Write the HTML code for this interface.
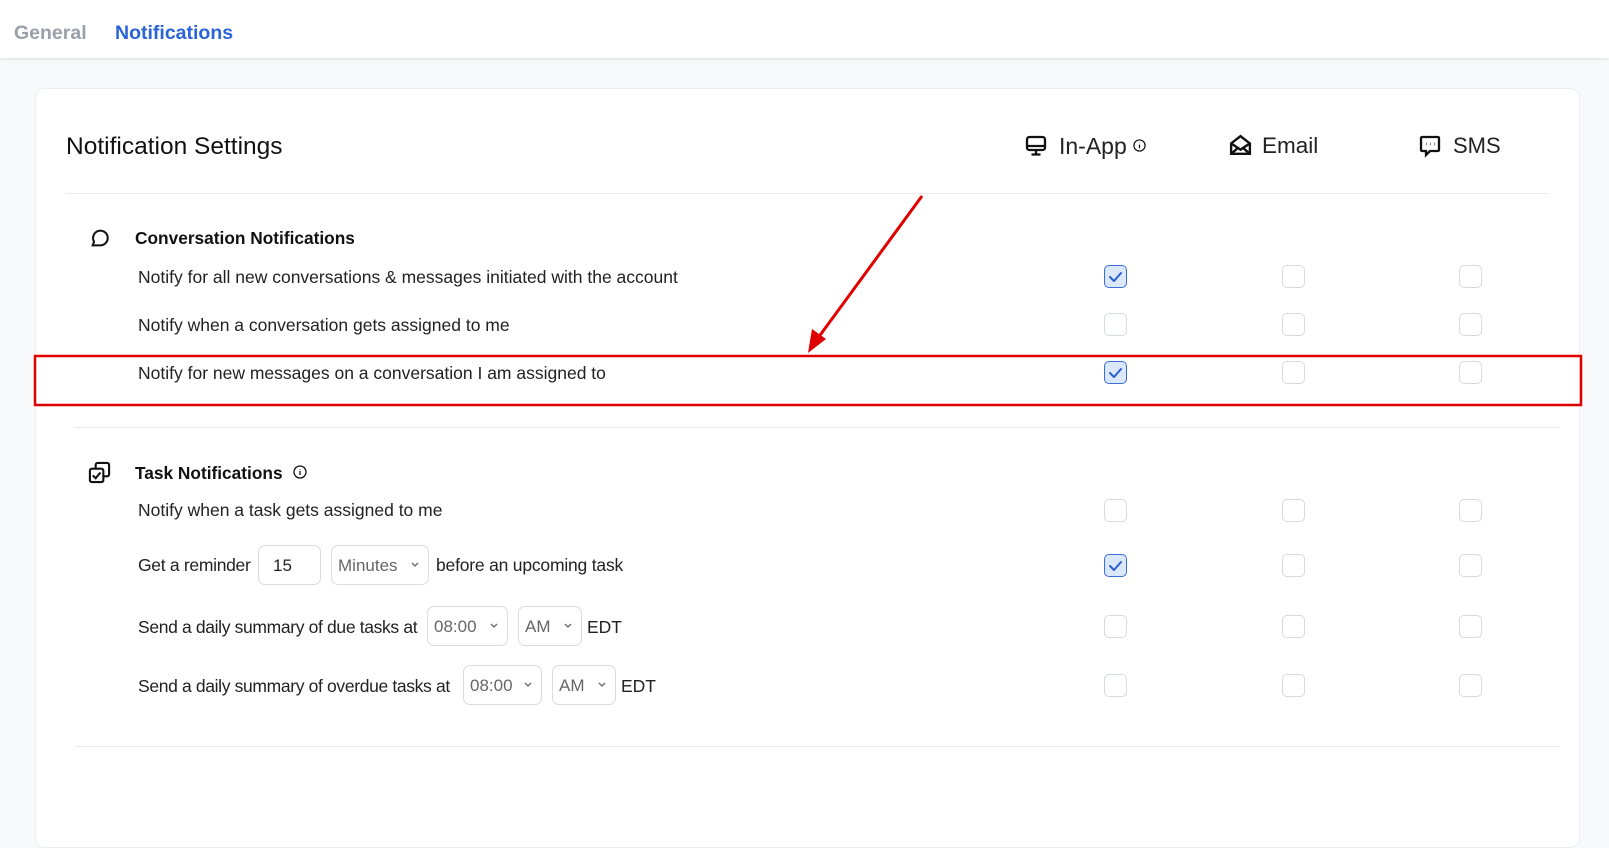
<!DOCTYPE html>
<html><head><meta charset="utf-8"><style>
*{box-sizing:border-box;margin:0;padding:0}
body{width:1609px;height:777px;overflow:hidden;background:#f8f9fa;font-family:"Liberation Sans",sans-serif;color:#111;position:relative}
.hdr{position:absolute;left:0;top:0;width:1609px;height:58px;background:#fff;box-shadow:0 1px 3px rgba(0,0,0,.12)}
.tab{position:absolute;top:22px;font-size:19.5px;font-weight:bold}
.card{position:absolute;left:35px;top:88px;width:1545px;height:760px;background:#fff;border:1px solid #eceef0;border-radius:10px}
.a{position:absolute}
.t{position:absolute;font-size:17.5px;color:#222;line-height:20px;white-space:nowrap}
.cb{position:absolute;width:23px;height:23px;border:1px solid #d6d9de;border-radius:5px;background:#fff}
.cb.on{background:#dbe7fd;border:1.5px solid #3a6fd8}
.line{position:absolute;height:1px;background:#e8e9eb}
.sel{position:absolute;height:40px;border:1px solid #d8dbe0;border-radius:7px;font-size:17px;color:#666;padding:10px 0 0 6px;background:#fff}
.sel svg{position:absolute;right:8px;top:15px}
</style></head><body>
<div class="hdr"></div>
<div class="tab" style="left:14px;color:#9aa0aa">General</div>
<div class="tab" style="left:115px;color:#2b63d9">Notifications</div>
<div class="card"></div>
<div class="t" style="left:66px;top:133px;font-size:24.5px;line-height:28px;color:#111">Notification Settings</div>

<svg class="a" style="left:1024px;top:134px" width="24" height="24" viewBox="0 0 24 24" fill="none" stroke="#111" stroke-width="2.3"><rect x="3" y="3" width="18" height="13" rx="2.5"/><path d="M3 12h18M7.5 20.5h9M12 16v4"/></svg>
<div class="t" style="left:1059px;top:132px;font-size:23px;line-height:28px">In-App</div>
<svg class="a" style="left:1133px;top:139px" width="13" height="13" viewBox="0 0 14 14" fill="none" stroke="#111" stroke-width="1.3"><circle cx="7" cy="7" r="6"/><path d="M7 6v4M7 4v.5"/></svg>
<svg class="a" style="left:1228px;top:133px" width="25" height="25" viewBox="0 0 24 24" fill="none" stroke="#111" stroke-width="2.3"><path d="M3 10l9-7 9 7v10H3z"/><path d="M3 10l9 6 9-6M3 20l7-6M21 20l-7-6"/></svg>
<div class="t" style="left:1262px;top:132px;font-size:22.5px;line-height:28px">Email</div>
<svg class="a" style="left:1418px;top:134px" width="24" height="24" viewBox="0 0 24 24" fill="none" stroke="#111" stroke-width="2.3"><path d="M4 3h16a1 1 0 011 1v12a1 1 0 01-1 1h-8l-4 4v-4H4a1 1 0 01-1-1V4a1 1 0 011-1z"/><path d="M8 10h.5M12 10h.5M16 10h.5" stroke-width="2.8"/></svg>
<div class="t" style="left:1453px;top:132px;font-size:22px;line-height:28px">SMS</div>
<div class="line" style="left:66px;top:193px;width:1483px"></div>

<svg class="a" style="left:89px;top:227px" width="22" height="22" viewBox="0 0 24 24" fill="none" stroke="#111" stroke-width="2.2"><path d="M4 20l1.5-4A8 8 0 1112 20H4z"/></svg>
<div class="t" style="left:135px;top:228px;font-size:17.3px;font-weight:bold;color:#111">Conversation Notifications</div>
<div class="t" style="left:138px;top:267px">Notify for all new conversations &amp; messages initiated with the account</div>
<div class="t" style="left:138px;top:315px">Notify when a conversation gets assigned to me</div>
<div class="t" style="left:138px;top:363px">Notify for new messages on a conversation I am assigned to</div>

<div class="line" style="left:75px;top:427px;width:1485px"></div>
<svg class="a" style="left:88px;top:461px" width="23" height="23" viewBox="0 0 24 24" fill="none" stroke="#111" stroke-width="2.2"><rect x="2" y="8" width="14" height="14" rx="2"/><path d="M8 8V4a2 2 0 012-2h10a2 2 0 012 2v10a2 2 0 01-2 2h-4"/><path d="M5 15l3 3 5-6"/></svg>
<div class="t" style="left:135px;top:463px;font-size:17.3px;font-weight:bold;color:#111">Task Notifications</div>
<svg class="a" style="left:293px;top:465px" width="14" height="14" viewBox="0 0 14 14" fill="none" stroke="#111" stroke-width="1.3"><circle cx="7" cy="7" r="6"/><path d="M7 6v4M7 4v.5"/></svg>
<div class="t" style="left:138px;top:500px">Notify when a task gets assigned to me</div>
<div class="t" style="left:138px;top:555px;letter-spacing:-0.3px">Get a reminder</div>
<div class="sel" style="left:258px;top:545px;width:63px;color:#222;padding-left:14px">15</div>
<div class="sel" style="left:331px;top:545px;width:98px">Minutes<svg width="10" height="7" viewBox="0 0 10 7" fill="none" stroke="#666" stroke-width="1.3"><path d="M2 2l3 3 3-3"/></svg></div>
<div class="t" style="left:436px;top:555px;letter-spacing:-0.2px">before an upcoming task</div>
<div class="t" style="left:138px;top:617px;letter-spacing:-0.35px">Send a daily summary of due tasks at</div>
<div class="sel" style="left:427px;top:606px;width:81px">08:00<svg width="10" height="7" viewBox="0 0 10 7" fill="none" stroke="#666" stroke-width="1.3"><path d="M2 2l3 3 3-3"/></svg></div>
<div class="sel" style="left:518px;top:606px;width:64px">AM<svg width="10" height="7" viewBox="0 0 10 7" fill="none" stroke="#666" stroke-width="1.3"><path d="M2 2l3 3 3-3"/></svg></div>
<div class="t" style="left:587px;top:617px">EDT</div>
<div class="t" style="left:138px;top:676px;letter-spacing:-0.35px">Send a daily summary of overdue tasks at</div>
<div class="sel" style="left:463px;top:665px;width:79px">08:00<svg width="10" height="7" viewBox="0 0 10 7" fill="none" stroke="#666" stroke-width="1.3"><path d="M2 2l3 3 3-3"/></svg></div>
<div class="sel" style="left:552px;top:665px;width:64px">AM<svg width="10" height="7" viewBox="0 0 10 7" fill="none" stroke="#666" stroke-width="1.3"><path d="M2 2l3 3 3-3"/></svg></div>
<div class="t" style="left:621px;top:676px">EDT</div>
<div class="line" style="left:75px;top:746px;width:1485px"></div>

<div class="cb on" style="left:1104px;top:265px"></div><div class="cb" style="left:1282px;top:265px"></div><div class="cb" style="left:1459px;top:265px"></div>
<div class="cb" style="left:1104px;top:313px"></div><div class="cb" style="left:1282px;top:313px"></div><div class="cb" style="left:1459px;top:313px"></div>
<div class="cb on" style="left:1104px;top:361px"></div><div class="cb" style="left:1282px;top:361px"></div><div class="cb" style="left:1459px;top:361px"></div>
<div class="cb" style="left:1104px;top:499px"></div><div class="cb" style="left:1282px;top:499px"></div><div class="cb" style="left:1459px;top:499px"></div>
<div class="cb on" style="left:1104px;top:554px"></div><div class="cb" style="left:1282px;top:554px"></div><div class="cb" style="left:1459px;top:554px"></div>
<div class="cb" style="left:1104px;top:615px"></div><div class="cb" style="left:1282px;top:615px"></div><div class="cb" style="left:1459px;top:615px"></div>
<div class="cb" style="left:1104px;top:674px"></div><div class="cb" style="left:1282px;top:674px"></div><div class="cb" style="left:1459px;top:674px"></div>
<svg class="a" style="left:0;top:0" width="1609" height="777">
<g fill="none" stroke="#2b5fcf" stroke-width="2" stroke-linecap="round" stroke-linejoin="round">
<path d="M1110 277l4 4 7-8"/><path d="M1110 373l4 4 7-8"/><path d="M1110 566l4 4 7-8"/></g>
<rect x="35" y="356" width="1546" height="49" fill="none" stroke="#e00000" stroke-width="2.5"/>
<line x1="922" y1="196" x2="818" y2="338" stroke="#e00000" stroke-width="3"/>
<path d="M808 353l4-24 14 10z" fill="#e00000"/>
</svg>
</body></html>
